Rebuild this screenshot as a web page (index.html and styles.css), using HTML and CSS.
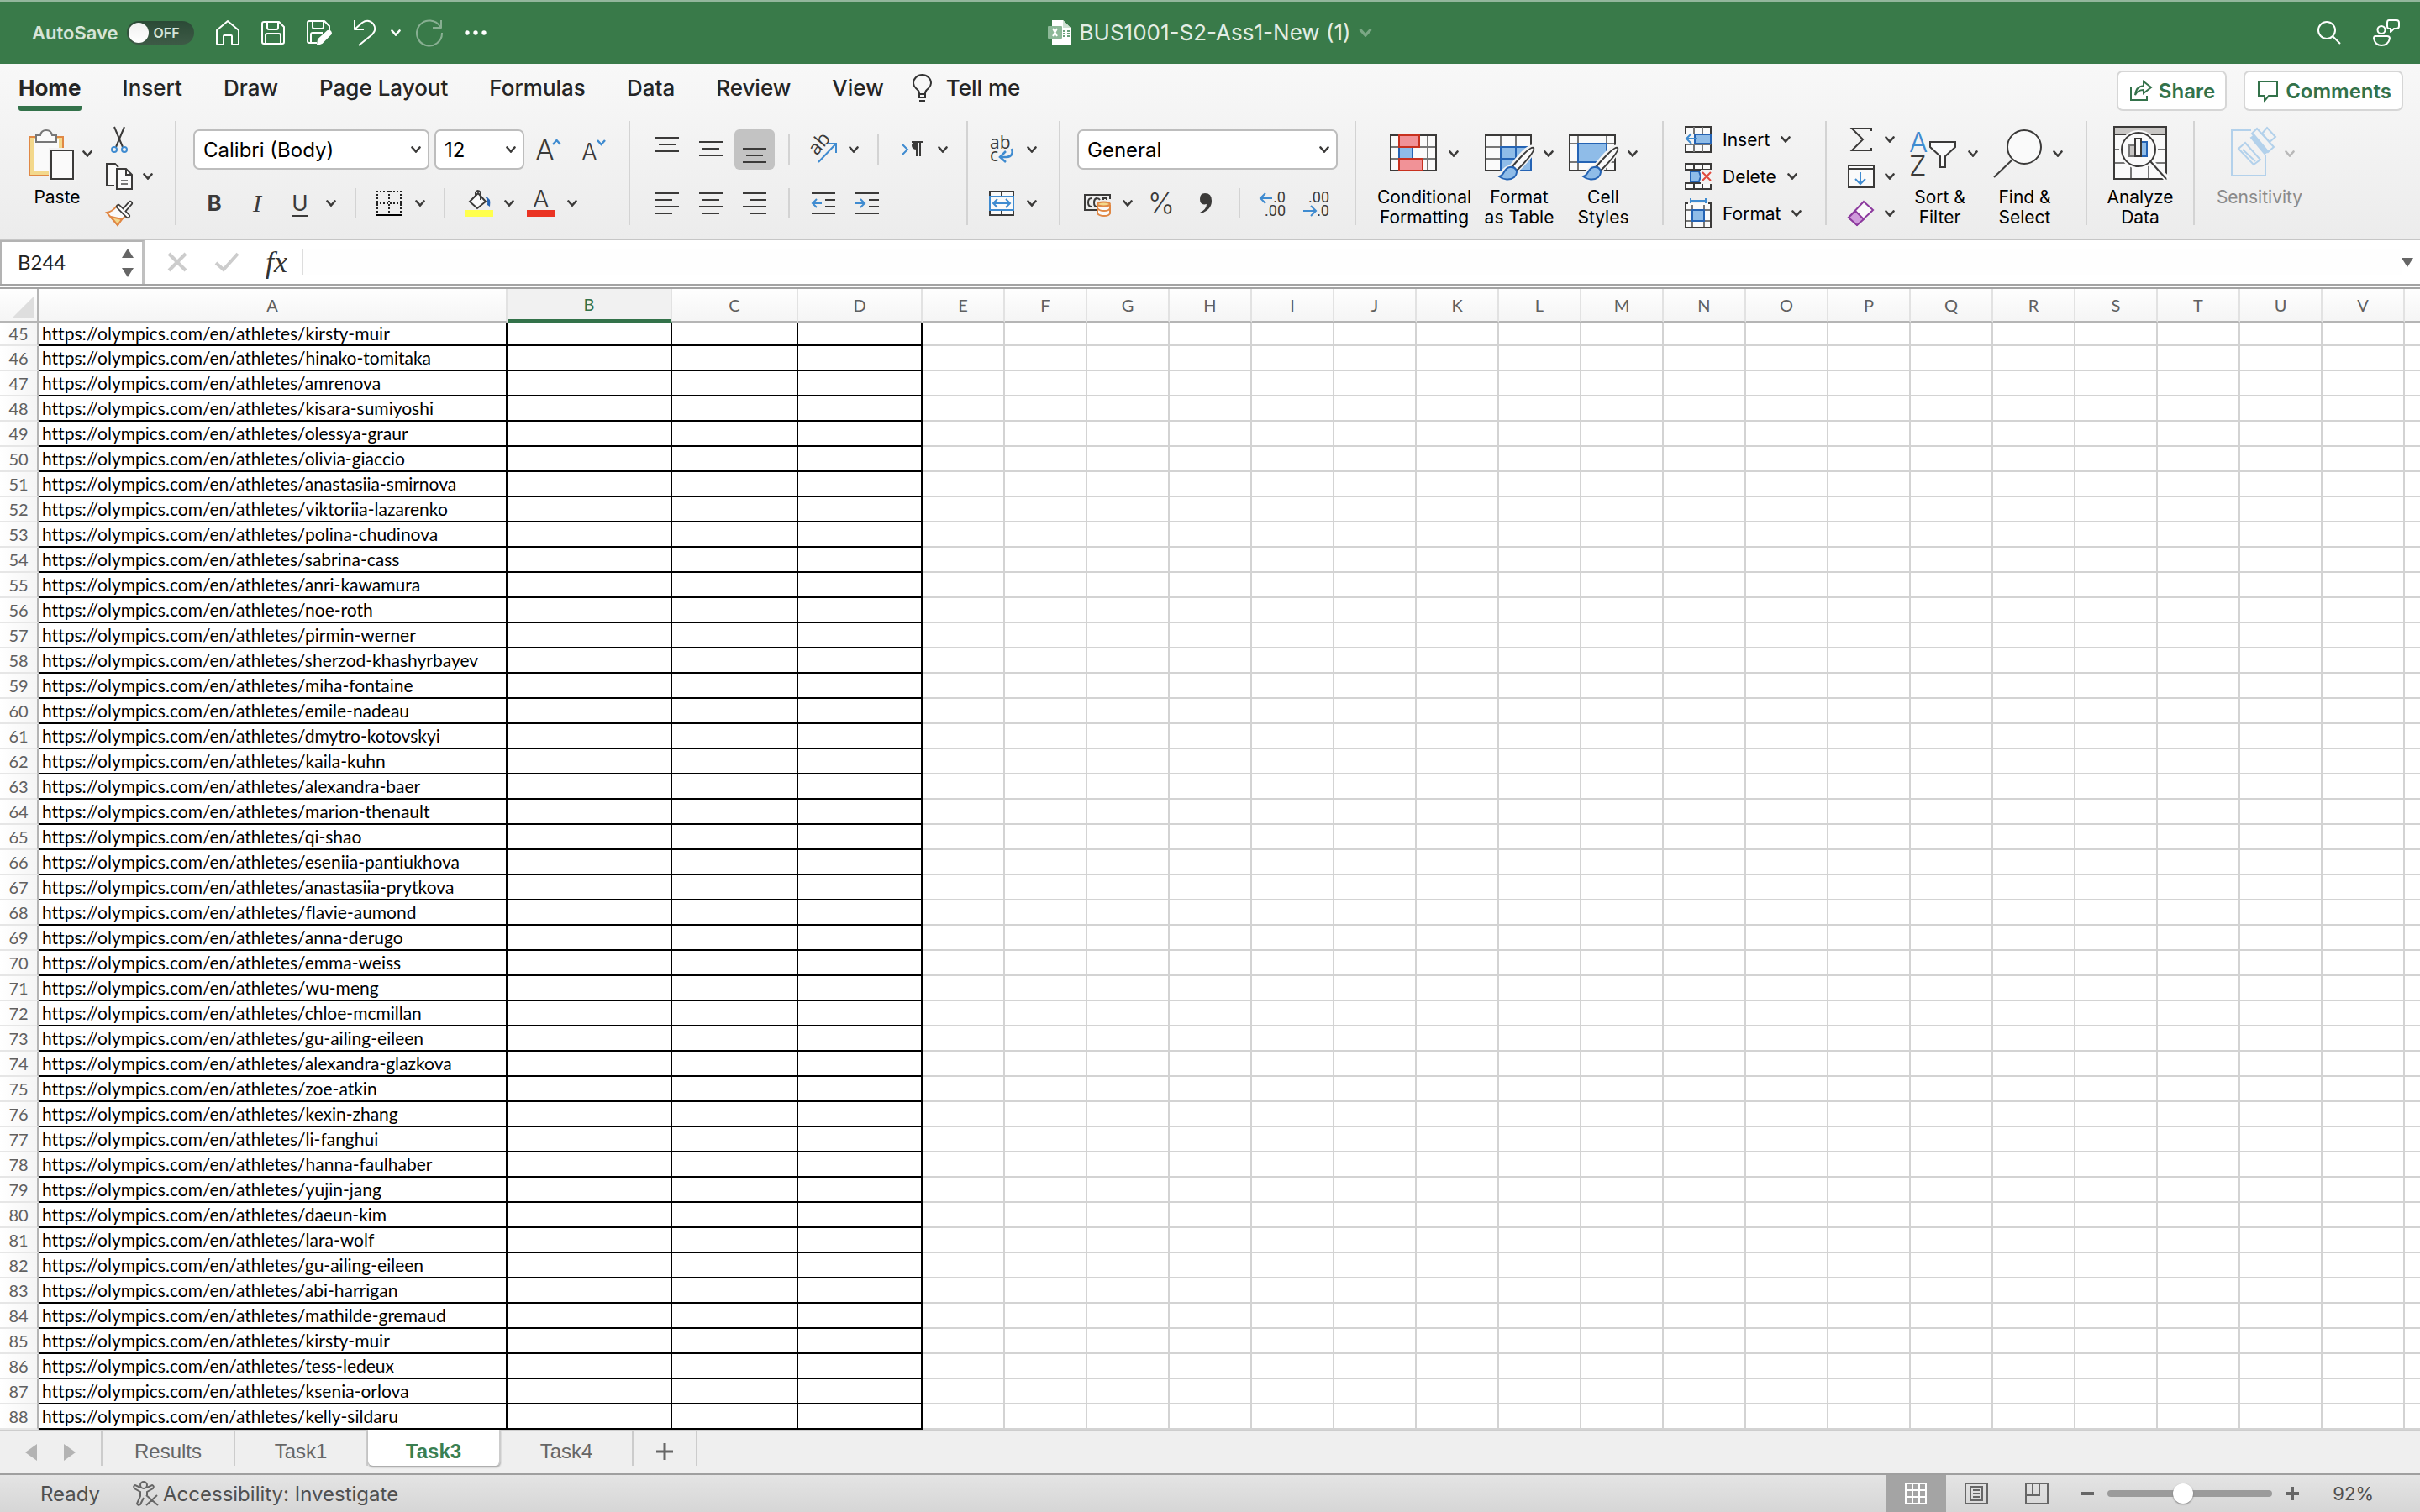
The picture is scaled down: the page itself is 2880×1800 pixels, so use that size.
FILE: index.html
```html
<!DOCTYPE html>
<html lang="en">
<head>
<meta charset="utf-8">
<meta name="viewport" content="width=device-width, initial-scale=1">
<title>BUS1001-S2-Ass1-New (1)</title>
<link rel="stylesheet" href="styles.css">
</head>
<body>
<svg class="sprite" aria-hidden="true">
  <symbol id="chevron" viewBox="0 0 12 8"><path d="M1.5 1.5L6 6.5L10.5 1.5" fill="none" stroke="currentColor" stroke-width="2.6" stroke-linecap="round"/></symbol>
  <symbol id="brush" viewBox="0 0 46 46"><path d="M43 3C46 6 40 14 23 31C26 40 14 45 0 38C8 36 6 28 16 27C28 12 38 1 43 3Z" fill="#f3f3f3" stroke="#f3f3f3" stroke-width="5"/><path d="M43 4C45 7 37 17 23 31L18 26C30 12 40 2 43 4Z" fill="#fafafa" stroke="#3b3a39" stroke-width="2"/><path d="M2 38C9 37 7 28 15 27C22 26 26 33 20 39C15 43 7 42 2 38Z" fill="#8fbce8" stroke="#2463b4" stroke-width="2"/></symbol>
</svg>

<header class="titlebar">
  <div class="quick">
    <label class="autosave"><span>AutoSave</span><span class="toggle"><input type="checkbox" aria-label="AutoSave"><span class="knob"></span><span class="off">OFF</span></span></label>
    <button class="plain" aria-label="Home"><svg width="28" height="32" viewBox="0 0 28 32" class="line"><path d="M1 13L14 2L27 13V29Q27 30 26 30H20Q19 30 19 29V20Q19 19 18 19H10Q9 19 9 20V29Q9 30 8 30H2Q1 30 1 29Z"/></svg></button>
    <button class="plain" aria-label="Save"><svg width="28" height="28" viewBox="0 0 28 28" class="line"><path d="M3 1H21L27 7V25Q27 27 25 27H3Q1 27 1 25V3Q1 1 3 1ZM7 1V8Q7 10 9 10H18Q20 10 20 8V1M5 27V17Q5 15 7 15H21Q23 15 23 17V27"/></svg></button>
    <button class="plain" aria-label="Save As"><svg width="30" height="30" viewBox="0 0 30 30" class="line"><path d="M12 27H3Q1 27 1 25V3Q1 1 3 1H21L27 7V12M7 1V8Q7 10 9 10H18Q20 10 20 8V1M5 27V17Q5 15 7 15H19"/><path d="M13 29L14 23L25 13Q29 12 29 16L18 27Z" fill="#fff"/></svg></button>
    <div class="history">
      <button class="plain" aria-label="Undo"><svg width="26" height="32" viewBox="0 0 26 32" class="line"><path d="M1 1V12H12M1 12L10 4Q17 -1 23 5Q28 12 22 18L6 31"/></svg></button>
      <button class="plain" aria-label="Undo history"><svg width="12" height="8"><use href="#chevron"/></svg></button>
      <button class="plain dim" aria-label="Redo"><svg width="32" height="32" viewBox="0 0 32 32" class="line"><path d="M30 1V10H20M29 9A15 15 0 1 0 31 16"/></svg></button>
    </div>
    <button class="plain" aria-label="More"><svg width="26" height="6" viewBox="0 0 26 6" fill="#fff"><circle cx="3" cy="3" r="2.7"/><circle cx="13" cy="3" r="2.7"/><circle cx="23" cy="3" r="2.7"/></svg></button>
  </div>
  <h1 class="doc-title">
    <svg width="28" height="30" viewBox="0 0 28 30"><path d="M5 0H18L27 9V29H5Z" fill="#fff"/><path d="M18 0L27 9H18Z" fill="#cfe0d3"/><path d="M18 12h3v2h-3zM23 12h3v2h-3zM18 15h3v2h-3zM23 15h3v2h-3zM18 18h3v2h-3zM23 18h3v2h-3z" fill="#6aa07a"/><rect y="7" width="17" height="15" rx="1" fill="#8db898"/><path d="M6 10L11 19M11 10L6 19" stroke="#fff" stroke-width="2"/></svg>
    <span>BUS1001-S2-Ass1-New (1)</span>
    <svg class="title-chev" width="16" height="10"><use href="#chevron"/></svg>
  </h1>
  <div class="title-right">
    <button class="plain" aria-label="Search"><svg width="28" height="28" viewBox="0 0 28 28" class="line"><circle cx="11" cy="11" r="10"/><path d="M18 18L27 27"/></svg></button>
    <button class="plain" aria-label="Presence"><svg width="32" height="32" viewBox="0 0 32 32" class="line"><circle cx="10" cy="12.500" r="4.500"/><path d="M3 20H17Q20 20 20 23Q18 31 10 31Q3 31 1 23Q1 20 3 20ZM19 1H28Q31 1 31 4V8Q31 11 28 11H25L21 15V11H19Q17 11 17 8V4Q17 1 19 1Z"/></svg></button>
  </div>
</header>

<section class="ribbon">
  <div class="tabrow">
    <nav class="tabs">
      <a href="#" class="active">Home</a><a href="#">Insert</a><a href="#">Draw</a><a href="#">Page Layout</a><a href="#">Formulas</a><a href="#">Data</a><a href="#">Review</a><a href="#">View</a>
    </nav>
    <a href="#" class="tellme"><svg width="24" height="32" viewBox="0 0 24 32" fill="none" stroke="#333" stroke-width="2"><path d="M8 22Q8 19 4 16Q1 13 1 10A10.500 10 0 0 1 22 10Q22 13 19 16Q15 19 15 22V27H8ZM8 23H15M8 31H15"/></svg><span>Tell me</span></a>
    <div class="actions">
      <button class="pill"><svg width="26" height="26" viewBox="0 0 26 26" fill="none" stroke="#33724a" stroke-width="2"><path d="M1 9V24H20V19"/><path d="M6 18Q7 8 16 7V2L25 9L16 16V12Q9 12 6 18Z"/></svg>Share</button>
      <button class="pill"><svg width="26" height="26" viewBox="0 0 26 26" fill="none" stroke="#33724a" stroke-width="2"><path d="M2 2H24V19H14L9 25V19H2Z"/></svg>Comments</button>
    </div>
  </div>

  <div class="groups">
    <div class="group g-clipboard">
      <button class="big"><span class="pic"><svg width="54" height="78" viewBox="0 0 54 78"><rect x="1" y="19" width="40" height="46" fill="#f3d88c" stroke="#e08845" stroke-width="2"/><rect x="6" y="22" width="30" height="37" fill="#fafafa"/><path d="M9 25V17H14Q15 11 21 11Q27 11 28 17H33V25Z" fill="#fafafa" stroke="#777" stroke-width="2"/><rect x="24" y="32" width="32" height="40" fill="#f3f3f3"/><rect x="27" y="35" width="26" height="34" fill="#fafafa" stroke="#3b3a39" stroke-width="2"/></svg><svg class="chev"><use href="#chevron"/></svg></span>Paste</button>
      <div class="tools">
        <button aria-label="Cut"><svg width="20" height="32" viewBox="0 0 20 32" fill="none" stroke-width="2"><path d="M4 1L14 25M16 1L6 25" stroke="#3b3a39"/><circle cx="4" cy="28" r="3" stroke="#3f8bd0"/><circle cx="16" cy="28" r="3" stroke="#3f8bd0"/></svg></button><span></span>
        <button aria-label="Copy"><svg width="32" height="32" viewBox="0 0 32 32" fill="#fafafa" stroke="#3b3a39" stroke-width="2"><path d="M10 27H1V1H11L15 5"/><path d="M13 7H24L31 14V31H13Z"/><path d="M24 7V14H31" fill="none"/><path d="M18 21H26M18 25H26" stroke="#777"/></svg></button><button aria-label="Copy options"><svg class="chev"><use href="#chevron"/></svg></button>
        <button aria-label="Format Painter"><svg width="32" height="30" viewBox="0 0 32 30" fill="none" stroke-width="2"><path d="M1 14Q8 13 13 6L24 18Q18 22 14 29Z" fill="#fafafa" stroke="#e08845"/><path d="M6 19L19 22L14 29Z" fill="#f3d88c" stroke="#e08845"/><path d="M15 7L26 18M21 12L29 3" stroke="#3b3a39" stroke-width="6" stroke-linecap="round"/><path d="M15 7L26 18M21 12L29 3" stroke="#fafafa" stroke-width="2.500" stroke-linecap="round"/></svg></button><span></span>
      </div>
    </div>

    <div class="group two g-font">
      <div class="row">
        <span class="select font-name"><select aria-label="Font"><option>Calibri (Body)</option></select><svg class="chev"><use href="#chevron"/></svg></span>
        <span class="select"><select aria-label="Font size"><option>12</option></select><svg class="chev"><use href="#chevron"/></svg></span>
        <button aria-label="Grow font"><svg width="32" height="32" viewBox="0 0 32 32"><text x="0" y="29" class="thin" font-size="34">A</text><path d="M21 10L25.500 5L30 10" fill="none" stroke="#3f8bd0" stroke-width="2.500"/></svg></button>
        <button aria-label="Shrink font"><svg width="32" height="32" viewBox="0 0 32 32"><text x="1" y="29" class="thin" font-size="28">A</text><path d="M20 5L24.500 10L29 5" fill="none" stroke="#3f8bd0" stroke-width="2.500"/></svg></button>
      </div>
      <div class="row">
        <button class="glyph bold">B</button><button class="glyph italic">I</button><button class="glyph under">U</button><button aria-label="Underline options"><svg class="chev"><use href="#chevron"/></svg></button><i class="sep"></i>
        <button aria-label="Borders"><svg width="30" height="30" viewBox="0 0 30 30" fill="none" stroke="#222" stroke-width="2"><path d="M1 0V28M29 0V28M15 0V28M0 1H30M0 15H30" stroke-dasharray="2 2"/><path d="M0 29H30" stroke="#000"/></svg></button><button aria-label="Border options"><svg class="chev"><use href="#chevron"/></svg></button><i class="sep"></i>
        <button aria-label="Fill color"><svg width="34" height="32" viewBox="0 0 34 32"><path d="M6 14L16 4L25 14L15 22Z" fill="#fafafa" stroke="#3b3a39" stroke-width="2"/><path d="M13 9V3Q15 -1 19 3V12" fill="none" stroke="#3b3a39" stroke-width="2"/><path d="M24 8Q32 9 30 20L27 18Q28 12 24 8Z" fill="#2463b4"/><path d="M0 24H34V32H0Z" fill="#ffff4d"/></svg></button><button aria-label="Fill options"><svg class="chev"><use href="#chevron"/></svg></button>
        <button aria-label="Font color"><svg width="34" height="32" viewBox="0 0 34 32"><text x="7" y="21" class="thin" font-size="29">A</text><path d="M0 24H34V32H0Z" fill="#ea3323"/></svg></button><button aria-label="Font color options"><svg class="chev"><use href="#chevron"/></svg></button>
      </div>
    </div>

    <div class="group two g-align">
      <div class="row">
        <button aria-label="Top align"><svg width="28" height="32" viewBox="0 0 28 32" class="ink"><path d="M0 1H28M4 9H24M0 17H28" transform="translate(0 1)"/></svg></button>
        <button aria-label="Middle align"><svg width="28" height="32" viewBox="0 0 28 32" class="ink"><path d="M0 7H28M4 15H24M0 23H28"/></svg></button>
        <button class="pressed" aria-label="Bottom align"><svg width="28" height="32" viewBox="0 0 28 32" class="ink"><path d="M0 15H28M4 23H24M0 31H28"/></svg></button><i class="sep"></i>
        <button aria-label="Orientation"><svg width="34" height="32" viewBox="0 0 34 32"><text x="0" y="0" transform="translate(9 24) rotate(-50)" font-size="23" class="mid">ab</text><path d="M11 31L31 10M22 9H32V20" fill="none" stroke="#3f8bd0" stroke-width="2"/></svg></button><button aria-label="Orientation options"><svg class="chev"><use href="#chevron"/></svg></button><i class="sep"></i>
        <button aria-label="Text direction"><svg width="26" height="20" viewBox="0 0 26 20" fill="none"><path d="M1 4L7 10L1 16" stroke="#3f8bd0" stroke-width="2"/><path d="M18 1V18M22 1V18M12 1H25" stroke="#3b3a39" stroke-width="2"/><path d="M18 1V10Q12 10 12 5Q12 1 18 1Z" fill="#3b3a39"/></svg></button><button aria-label="Direction options"><svg class="chev"><use href="#chevron"/></svg></button>
      </div>
      <div class="row">
        <button aria-label="Align left"><svg width="28" height="28" viewBox="0 0 28 28" class="ink"><path d="M0 2H28M0 10H20M0 18H28M0 26H20"/></svg></button>
        <button aria-label="Center"><svg width="28" height="28" viewBox="0 0 28 28" class="ink"><path d="M0 2H28M4 10H24M0 18H28M4 26H24"/></svg></button>
        <button aria-label="Align right"><svg width="28" height="28" viewBox="0 0 28 28" class="ink"><path d="M0 2H28M8 10H28M0 18H28M8 26H28"/></svg></button><i class="sep"></i>
        <button aria-label="Decrease indent"><svg width="28" height="28" viewBox="0 0 28 28" class="ink"><path d="M0 2H28M16 10H28M16 18H28M0 26H28"/><path d="M12 14H1M6 9L1 14L6 19" stroke="#3f8bd0"/></svg></button>
        <button aria-label="Increase indent"><svg width="28" height="28" viewBox="0 0 28 28" class="ink"><path d="M0 2H28M16 10H28M16 18H28M0 26H28"/><path d="M0 14H11M6 9L11 14L6 19" stroke="#3f8bd0"/></svg></button>
      </div>
    </div>

    <div class="group two g-wrap">
      <div class="row">
        <button aria-label="Wrap text"><svg width="28" height="32" viewBox="0 0 28 32"><text x="0" y="15" font-size="21" class="mid">ab</text><text x="0" y="30" font-size="21" class="mid">c</text><path d="M26 15Q29 24 20 25H13M19 18L12 25L19 31" fill="none" stroke="#3f8bd0" stroke-width="2.500"/></svg></button><button aria-label="Wrap options"><svg class="chev"><use href="#chevron"/></svg></button>
      </div>
      <div class="row">
        <button aria-label="Merge"><svg width="30" height="30" viewBox="0 0 30 30" fill="#fafafa" stroke="#3b3a39" stroke-width="2"><path d="M1 1H29V29H1ZM15 1V7M15 23V29"/><path d="M1 7H29V23H1ZM5 15H25M10 10L5 15L10 20M20 10L25 15L20 20" stroke="#3f8bd0"/></svg></button><button aria-label="Merge options"><svg class="chev"><use href="#chevron"/></svg></button>
      </div>
    </div>

    <div class="group two g-number">
      <div class="row">
        <span class="select"><select aria-label="Number format"><option>General</option></select><svg class="chev"><use href="#chevron"/></svg></span>
      </div>
      <div class="row">
        <button aria-label="Currency"><svg width="32" height="30" viewBox="0 0 32 30" fill="none" stroke="#3b3a39" stroke-width="2"><path d="M31 10V5H1V23H15M9 9Q5 9 5 14Q5 19 9 19M19 11Q18 9 15 9Q12 10 12 14Q12 19 15 19M23 11V9H27V11"/><path d="M16 17V27Q18 30 24 30Q30 30 31 27V17" fill="#fafafa" stroke="#e08845"/><ellipse cx="23.500" cy="16" rx="7.500" ry="2.500" fill="#f3d88c" stroke="#e08845"/><path d="M16 21Q18 24 24 24Q30 24 31 21" stroke="#e08845"/></svg></button><button aria-label="Currency options"><svg class="chev"><use href="#chevron"/></svg></button>
        <button class="glyph percent">%</button>
        <button aria-label="Comma style"><svg width="16" height="26" viewBox="0 0 16 26"><path d="M7 1Q15 1 15 10Q15 21 2 25L1 24Q9 20 9 14Q1 16 1 8Q1 1 7 1Z" fill="#3b3a39"/></svg></button><i class="sep"></i>
        <button aria-label="Increase decimal"><svg width="32" height="32" viewBox="0 0 32 32"><text x="31" y="15" text-anchor="end" font-size="18" class="dec">.0</text><text x="31" y="31" text-anchor="end" font-size="18" class="dec">.00</text><path d="M15 10H1M7 4L1 10L7 16" fill="none" stroke="#3f8bd0" stroke-width="2"/></svg></button>
        <button aria-label="Decrease decimal"><svg width="32" height="32" viewBox="0 0 32 32"><text x="31" y="15" text-anchor="end" font-size="18" class="dec">.00</text><text x="31" y="31" text-anchor="end" font-size="18" class="dec">.0</text><path d="M0 25H15M9 19L15 25L9 31" fill="none" stroke="#3f8bd0" stroke-width="2"/></svg></button>
      </div>
    </div>

    <div class="group g-styles">
      <button class="big"><span class="pic"><svg width="60" height="78" viewBox="0 0 60 78" fill="#fafafa" stroke="#777" stroke-width="2"><path d="M1 17H55V59H1Z"/><path d="M1 31H55M1 45H55M45 17V59M11 17V59" fill="none"/><path d="M1 17H55V59H1Z" fill="none" stroke="#3b3a39"/><path d="M37 32H28V44H44V32Z" stroke="none"/><path d="M11 31H27V45H11Z" fill="#8fbce8" stroke="#2463b4"/><path d="M11 17H35V31H11ZM11 45H39V59H11Z" fill="#f19297" stroke="#c8311f"/></svg><svg class="chev"><use href="#chevron"/></svg></span>Conditional<br>Formatting</button>
      <button class="big"><span class="pic"><svg width="60" height="78" viewBox="0 0 60 78" fill="#fafafa" stroke="#777" stroke-width="2"><path d="M1 17H55V59H1Z"/><path d="M1 31H55M1 45H19M19 17V59M37 17V31" fill="none"/><path d="M1 17H55V59H1Z" fill="none" stroke="#3b3a39"/><path d="M19 31H55V59H19ZM37 31V59M19 45H55" fill="#8fbce8" stroke="#2463b4"/><use href="#brush" x="15" y="28" width="46" height="46"/></svg><svg class="chev"><use href="#chevron"/></svg></span>Format<br>as Table</button>
      <button class="big"><span class="pic"><svg width="60" height="78" viewBox="0 0 60 78" fill="#fafafa" stroke="#777" stroke-width="2"><path d="M1 17H55V59H1Z"/><path d="M1 27H55M1 49H55M11 17V59M45 17V59" fill="none"/><path d="M1 17H55V59H1Z" fill="none" stroke="#3b3a39"/><path d="M11 27H45V49H11Z" fill="#8fbce8" stroke="#2463b4"/><use href="#brush" x="15" y="28" width="46" height="46"/></svg><svg class="chev"><use href="#chevron"/></svg></span>Cell<br>Styles</button>
    </div>

    <div class="group g-cells">
      <button><svg width="32" height="32" viewBox="0 0 32 32" fill="#fafafa" stroke="#777" stroke-width="2"><path d="M1 1H31V31H1Z" stroke="#3b3a39"/><path d="M11 1V31M21 1V31M1 10H31M1 22H31" fill="none"/><path d="M0 9H12V22H0Z" fill="#f3f3f3" stroke="none"/><path d="M12 10H31V21H12Z" fill="#8fbce8" stroke="#2463b4"/><path d="M15 15H2M8 9L2 15L8 21" fill="none" stroke="#3f8bd0"/></svg>Insert<svg class="chev"><use href="#chevron"/></svg></button>
      <button><svg width="32" height="32" viewBox="0 0 32 32" fill="#fafafa" stroke="#777" stroke-width="2"><path d="M1 8V1H31V8ZM1 31V24H31V31ZM11 1V8M21 1V8M11 24V31M21 24V31" stroke="#3b3a39"/><path d="M7 10H17L19 16L17 22H7Z" fill="#8fbce8" stroke="#2463b4"/><path d="M19 8H32V25H19Z" fill="#f3f3f3" stroke="none"/><path d="M21 11L31 21M31 11L21 21" fill="none" stroke="#e04a3f"/></svg>Delete<svg class="chev"><use href="#chevron"/></svg></button>
      <button><svg width="32" height="36" viewBox="0 0 32 36" fill="#fafafa" stroke="#777" stroke-width="2"><path d="M7 3H25M7 0V6M25 0V6" stroke="#3f8bd0"/><path d="M1 6V35H31V6"/><path d="M9 8V35M23 8V35M1 14H31M1 27H31" fill="none"/><path d="M4 6H1V35H31V6H28" fill="none" stroke="#3b3a39"/><path d="M9 14H23V27H9Z" fill="#8fbce8" stroke="#2463b4"/></svg>Format<svg class="chev"><use href="#chevron"/></svg></button>
    </div>

    <div class="group g-edit">
      <div class="tools">
        <button aria-label="AutoSum"><svg width="26" height="28" viewBox="0 0 26 28" class="ink"><path d="M25 4V1H2L15 14L2 27H25V24"/></svg></button><button aria-label="Sum options"><svg class="chev"><use href="#chevron"/></svg></button>
        <button aria-label="Fill"><svg width="32" height="28" viewBox="0 0 32 28" class="ink"><path d="M1 1H31V27H1ZM1 5H31" fill="#fafafa"/><path d="M15 9V22M9 17L15 23L21 17" stroke="#3f8bd0"/></svg></button><button aria-label="Fill options"><svg class="chev"><use href="#chevron"/></svg></button>
        <button aria-label="Clear"><svg width="32" height="30" viewBox="0 0 32 30" stroke="#8c3a9e" stroke-width="2"><path d="M19 1L30 11L11 29L1 20Z" fill="#fafafa"/><path d="M9 12L19 22L11 29L1 20Z" fill="#cf9adb"/></svg></button><button aria-label="Clear options"><svg class="chev"><use href="#chevron"/></svg></button>
      </div>
      <button class="big"><span class="pic"><svg width="60" height="78" viewBox="0 0 60 78"><text x="0" y="37" class="thin azure" font-size="33">A</text><text x="0" y="65" class="thin" font-size="33">Z</text><path d="M25 25H55V31L43 42V55H37V42L25 31Z" fill="#fafafa" stroke="#3b3a39" stroke-width="2"/></svg><svg class="chev"><use href="#chevron"/></svg></span>Sort &amp;<br>Filter</button>
      <button class="big"><span class="pic"><svg width="60" height="78" viewBox="0 0 60 78" fill="#fafafa" stroke="#3b3a39" stroke-width="2"><circle cx="36" cy="31" r="20"/><path d="M22 46L0 67"/></svg><svg class="chev"><use href="#chevron"/></svg></span>Find &amp;<br>Select</button>
    </div>

    <div class="group g-analyze">
      <button class="big"><span class="pic"><svg width="64" height="78" viewBox="0 0 64 78" fill="#fafafa" stroke="#777" stroke-width="2"><path d="M1 7H63V69H1Z"/><path d="M1 34H63M1 50H63M21 50V69M42 50V69" fill="none"/><path d="M1 7H63V16H1Z" fill="#c8c6c4"/><path d="M1 16H63M1 7H63V69H1Z" fill="none" stroke="#3b3a39"/><circle cx="30" cy="34" r="23" stroke="none"/><path d="M19 29H26V42H19Z" fill="#c8c6c4"/><path d="M33 25H40V42H33Z" fill="#8fbce8" stroke="#2463b4"/><path d="M26 21H33V42H26Z" stroke="#3b3a39"/><circle cx="30" cy="34" r="20" fill="none" stroke="#3b3a39"/><path d="M46 50L64 69" stroke="#fafafa" stroke-width="7"/><path d="M44 48L63 69" stroke="#3b3a39"/></svg></span>Analyze<br>Data</button>
    </div>

    <div class="group g-sensitivity">
      <button class="big" disabled><span class="pic"><svg width="54" height="78" viewBox="0 0 54 78" fill="none" stroke="#b3d1eb" stroke-width="2"><path d="M24 11H1V65H41V40"/><path d="M9 33L17 26L35 46L27 52ZM14 34L29 48" /><path d="M25 15L31 9L51 31L44 37Z" fill="#f3f3f3"/><path d="M24 20L28 17L44 36L40 39Z" fill="#b3d1eb"/><path d="M37 15L43 8L53 19L46 25Z" fill="#f3f3f3"/></svg><svg class="chev"><use href="#chevron"/></svg></span>Sensitivity</button>
    </div>
  </div>
</section>

<section class="formula">
  <div class="namebox"><input type="text" value="B244" aria-label="Name box"><span class="spin"><i class="up"></i><i class="down"></i></span></div>
  <button aria-label="Cancel"><svg width="24" height="24" viewBox="0 0 24 24"><path d="M2 2L22 22M22 2L2 22" stroke="#ccc" stroke-width="4"/></svg></button>
  <button aria-label="Enter"><svg width="28" height="24" viewBox="0 0 28 24"><path d="M1 13L10 21L27 2" fill="none" stroke="#ccc" stroke-width="4"/></svg></button>
  <button class="fx">fx</button>
  <input class="entry" type="text" aria-label="Formula">
  <i class="down"></i>
</section>

<main class="sheet">
  <table>
    <colgroup id="cols"></colgroup>
    <thead><tr id="letters"></tr></thead>
    <tbody id="rows"></tbody>
  </table>
</main>

<nav class="sheets">
  <div class="arrows"><button aria-label="Previous sheet"><svg width="14" height="20"><path d="M14 0V20L0 10Z" fill="#b3b3b3"/></svg></button><button aria-label="Next sheet"><svg width="14" height="20"><path d="M0 0V20L14 10Z" fill="#b3b3b3"/></svg></button></div>
  <a href="#">Results</a><a href="#">Task1</a><a href="#" class="active">Task3</a><a href="#">Task4</a>
  <button class="add" aria-label="Add sheet"><svg width="20" height="20"><path d="M10 0V20M0 10H20" stroke="#666" stroke-width="3"/></svg></button>
</nav>

<footer class="status">
  <span class="ready">Ready</span>
  <a href="#" class="access"><svg width="30" height="30" viewBox="0 0 30 30" fill="none" stroke="#666" stroke-width="2"><circle cx="13" cy="5" r="4"/><path d="M9 8L3 5Q0 6 2 9L9 13V18L5 27Q6 30 9 28L13 20M17 8L23 5Q26 6 24 9L17 13V17M16 17L30 29M29 17L16 29"/></svg><span>Accessibility: Investigate</span></a>
  <div class="views">
    <button class="on" aria-label="Normal view"><svg width="26" height="26" viewBox="0 0 26 26" fill="none" stroke="#fff" stroke-width="2"><path d="M1 1H25V25H1ZM9 1V25M17 1V25M1 9H25M1 17H25"/></svg></button>
    <button aria-label="Page layout view"><svg width="28" height="26" viewBox="0 0 28 26" fill="none" stroke="#666" stroke-width="2"><path d="M1 1H27V25H1ZM7 5H21V21H7ZM10 9H18M10 13H18M10 17H18"/></svg></button>
    <button aria-label="Page break view"><svg width="28" height="26" viewBox="0 0 28 26" fill="none" stroke="#666" stroke-width="2"><path d="M1 1H27V25H1ZM1 15H17V1M9 1V15"/></svg></button>
  </div>
  <button class="zoom" aria-label="Zoom out"><svg width="16" height="18"><path d="M0 9H16" stroke="#666" stroke-width="4"/></svg></button>
  <input type="range" min="0" max="1000" value="453" aria-label="Zoom">
  <button class="zoom" aria-label="Zoom in"><svg width="16" height="18"><path d="M0 9H16M8 1V17" stroke="#666" stroke-width="4"/></svg></button>
  <span class="percent-label">92%</span>
</footer>
<script src="script.js"></script>
</body>
</html>
```
FILE: script.js
```js
const firstRow = 45;
const athletes = [
  'kirsty-muir', 'hinako-tomitaka', 'amrenova', 'kisara-sumiyoshi', 'olessya-graur',
  'olivia-giaccio', 'anastasiia-smirnova', 'viktoriia-lazarenko', 'polina-chudinova',
  'sabrina-cass', 'anri-kawamura', 'noe-roth', 'pirmin-werner', 'sherzod-khashyrbayev',
  'miha-fontaine', 'emile-nadeau', 'dmytro-kotovskyi', 'kaila-kuhn', 'alexandra-baer',
  'marion-thenault', 'qi-shao', 'eseniia-pantiukhova', 'anastasiia-prytkova',
  'flavie-aumond', 'anna-derugo', 'emma-weiss', 'wu-meng', 'chloe-mcmillan',
  'gu-ailing-eileen', 'alexandra-glazkova', 'zoe-atkin', 'kexin-zhang', 'li-fanghui',
  'hanna-faulhaber', 'yujin-jang', 'daeun-kim', 'lara-wolf', 'gu-ailing-eileen',
  'abi-harrigan', 'mathilde-gremaud', 'kirsty-muir', 'tess-ledeux', 'ksenia-orlova',
  'kelly-sildaru'
];
const letters = 'ABCDEFGHIJKLMNOPQRSTUV'.split('');
const lead = ['head', 'a', 'b', 'c', 'd'];

document.getElementById('cols').innerHTML =
  lead.map(n => `<col class="col-${n}">`).join('') +
  '<col class="col-std">'.repeat(letters.length - 4) + '<col>';

document.getElementById('letters').innerHTML =
  '<th class="corner"><svg width="26" height="26"><path d="M26 0V26H0Z" fill="#dedede"/></svg></th>' +
  letters.map(l => `<th scope="col"${l === 'B' ? ' class="current"' : ''}>${l}</th>`).join('') + '<th></th>';

document.getElementById('rows').innerHTML = athletes.map((name, i) =>
  `<tr><th scope="row">${firstRow + i}</th>` +
  `<td class="data">https://olympics.com/en/athletes/${name}</td>` +
  '<td class="data"></td>'.repeat(3) +
  '<td></td>'.repeat(letters.length - 3) + '</tr>').join('');
```
FILE: styles.css
```css
* { box-sizing: border-box; }
html, body { height: 100%; }
body {
  margin: 0;
  display: flex;
  flex-direction: column;
  font-family: Inter, "Liberation Sans", sans-serif;
  color: #111;
  background: #fff;
  overflow: hidden;
}
button, input, select { font: inherit; color: inherit; margin: 0; }
button { border: 0; padding: 0; background: none; }
a { color: inherit; text-decoration: none; }
svg { display: block; flex: none; overflow: visible; }
.sprite { position: absolute; width: 0; height: 0; }
.chev { width: 12px; height: 8px; color: #3b3a39; }
.line { fill: none; stroke: #fff; stroke-width: 2; stroke-linejoin: round; }
.ink { fill: none; stroke: #3b3a39; stroke-width: 2; }

/* Title bar */
.titlebar {
  flex: none;
  height: 76px;
  display: grid;
  grid-template-columns: 1fr auto 1fr;
  align-items: center;
  padding: 0 24px;
  background: #397a49;
  border-top: 2px solid #93b69c;
  color: #fff;
}
.quick { display: flex; align-items: center; gap: 26px; padding-left: 14px; }
.autosave { display: flex; align-items: center; gap: 10px; font-size: 22px; font-weight: 600; color: #d5e4d9; }
.toggle { display: flex; align-items: center; width: 80px; height: 28px; padding: 0 2px; gap: 6px; border-radius: 14px; background: linear-gradient(#2b4a36, #3d5a46); }
.toggle input { position: absolute; opacity: 0; }
.knob { width: 24px; height: 24px; border-radius: 50%; background: linear-gradient(#f0f0f0, #fff); }
.off { font-size: 16px; font-weight: 600; }
.history { display: flex; align-items: center; gap: 18px; }
.dim { opacity: .4; }
.doc-title { display: flex; align-items: center; gap: 10px; margin: 0; font-size: 26px; font-weight: 400; line-height: 32px; color: #e3ede5; }
.title-chev { color: #7ba785; }
.title-right { display: flex; align-items: center; justify-content: flex-end; gap: 38px; }

/* Ribbon */
.ribbon { flex: none; height: 210px; background: linear-gradient(#f8f8f8, #f2f2f2 50%, #ececec); border-bottom: 2px solid #c6c6c6; }
.tabrow { display: flex; height: 68px; padding: 8px 20px 0 22px; }
.tabs { display: flex; align-items: flex-start; gap: 49px; font-size: 26px; font-weight: 500; color: #252525; }
.tabs a { height: 48px; padding-top: 5px; line-height: 32px; }
.tabs .active { font-weight: 700; border-bottom: 6px solid #33724a; border-radius: 3px; }
.tellme { display: flex; gap: 16px; margin-left: 34px; padding-top: 5px; font-size: 26px; font-weight: 500; line-height: 32px; color: #252525; }
.actions { display: flex; gap: 20px; margin-left: auto; }
.pill { display: flex; align-items: center; gap: 8px; height: 48px; padding: 0 12px 0 14px; border: 2px solid #d6d6d6; border-radius: 7px; background: #fff; font-size: 24px; font-weight: 600; color: #33724a; }
.groups { display: flex; height: 124px; }
.group { flex: none; display: flex; border-right: 2px solid #d3d3d3; }
.group:last-child { border-right: 0; }
.group button { display: flex; align-items: center; justify-content: center; }
.group .big { flex-direction: column; justify-content: flex-start; height: 128px; font-size: 21px; line-height: 24px; color: #000; }
.group .big:disabled { color: #8a8a8a; }
.big:disabled .chev { color: #b8b8b8; }
.pic { display: flex; align-items: center; gap: 10px; height: 78px; margin-bottom: 1px; }
.g-clipboard .pic, .g-edit .pic, .g-sensitivity .pic { padding-left: 8px; }
.tools { display: grid; grid-auto-rows: 44px; }
.two { flex-direction: column; gap: 16px; padding-top: 10px; }
.row { display: grid; align-items: center; justify-items: center; height: 48px; }
.sep { width: 2px; height: 36px; background: #d3d3d3; }

.select { display: grid; grid-template-columns: 1fr auto; align-items: center; width: 100%; height: 48px; padding-right: 8px; border: 2px solid #bdbdbd; border-radius: 7px; background: #fff; }
.select select { grid-area: 1 / 1 / 2 / 3; width: 100%; height: 44px; padding: 0 24px 0 10px; border: 0; background: none; appearance: none; font-size: 24px; color: #000; }
.select .chev { grid-area: 1 / 2; }

.thin { font-family: Inter, sans-serif; font-weight: 300; fill: #3b3a39; }
.mid { font-family: "Open Sans", sans-serif; fill: #3b3a39; }
.dec { font-family: Roboto, sans-serif; fill: #3b3a39; }
.azure { fill: #3f8bd0; }
.glyph { font-size: 26px; line-height: 32px; color: #3b3a39; }
.bold { font-weight: 700; }
.italic { font-family: "Liberation Serif", serif; font-style: italic; font-size: 30px; }
.under { text-decoration: underline; text-underline-offset: 5px; text-decoration-thickness: 2px; }
.percent { font-size: 34px; font-weight: 300; }
.pressed { width: 48px; height: 48px; border-radius: 6px; background: #c3c3c3; }

.g-clipboard { width: 210px; padding-left: 22px; }
.g-clipboard .big { width: 92px; margin-right: 8px; }
.g-clipboard .tools { grid-template-columns: 40px 28px; }
.g-font { width: 540px; padding-left: 20px; }
.g-font .row:first-child { grid-template-columns: 287px 107px 58px 50px; }
.g-font .row:last-child { grid-template-columns: 50px 52px 50px 24px 34px 46px 28px 30px 52px 20px 56px 18px; }
.g-font .font-name { width: 281px; justify-self: start; }
.g-align { width: 402px; padding-left: 18px; }
.g-align .row { grid-template-columns: 52px 52px 52px 30px 52px 20px 38px 44px 28px; }
.g-align .row:last-child { grid-template-columns: 52px 52px 52px 30px 52px 52px; }
.g-wrap { width: 110px; padding-left: 19px; }
.g-wrap .row { grid-template-columns: 42px 30px; }
.g-number { width: 352px; padding-left: 20px; }
.g-number .row:first-child { grid-template-columns: 310px; }
.g-number .row:last-child { grid-template-columns: 48px 24px 56px 50px 30px 50px 54px; }
.g-styles { width: 366px; padding-left: 19px; display: grid; grid-template-columns: 124px 102px 98px; }
.g-cells { width: 194px; padding-left: 25px; display: grid; grid-auto-rows: 44px; }
.g-cells button { justify-content: flex-start; gap: 13px; font-size: 21px; color: #000; }
.g-edit { width: 310px; padding-left: 16px; }
.g-edit .tools { grid-template-columns: 50px 18px; }
.g-edit .big { width: 101px; }
.g-analyze { width: 128px; justify-content: center; }
.g-sensitivity { padding-left: 22px; }
.g-sensitivity .big { width: 110px; }

/* Formula bar */
.formula { flex: none; display: flex; align-items: center; height: 58px; padding-right: 8px; background: #fff; border-bottom: 6px double #a3a3a3; }
.namebox { display: flex; align-items: center; justify-content: space-between; align-self: stretch; width: 172px; padding: 0 10px 0 19px; border: 2px solid #b3b3b3; border-bottom: 0; border-right: 3px solid #c0c0c0; margin-right: 18px; }
.namebox input { width: 100px; padding: 0 0 4px; border: 0; font: 24px Lato, sans-serif; color: #222; }
.spin { display: flex; flex-direction: column; gap: 12px; }
.up, .down { border: 7px solid transparent; border-top: 11px solid #666; border-bottom: 0; }
.up { border-top: 0; border-bottom: 11px solid #666; }
.formula button { display: flex; justify-content: center; width: 42px; margin-right: 17px; }
.formula .fx { margin-right: 9px; font: italic 36px "Liberation Serif", serif; color: #333; }
.entry { flex: 1; height: 30px; border: 0; border-left: 2px solid #ddd; background: #fefefe; }

/* Grid */
.sheet { flex: 1; min-height: 0; overflow: hidden; border-bottom: 2px solid #cdcdcd; font-family: Lato, sans-serif; font-variant-ligatures: none; }
.sheet table { width: 100%; table-layout: fixed; border-collapse: separate; border-spacing: 0; }
.col-head { width: 46px; }
.col-a { width: 558px; }
.col-b { width: 196px; }
.col-c { width: 150px; }
.col-d { width: 148px; }
.col-std { width: 98px; }
.sheet th { padding: 0; font-size: 20px; font-weight: 400; color: #606060; border-right: 2px solid #e2e2e2; }
.sheet thead th { height: 40px; line-height: 36px; background: linear-gradient(#fefefe, #f5f5f5); border-bottom: 2px solid #b5b5b5; }
.sheet thead .current { background: #f1f1f1; color: #33724a; border-bottom: 4px solid #33724a; }
.corner svg { margin: 6px 0 0 14px; }
.sheet thead .corner, .sheet tbody th { border-right-color: #b5b5b5; }
.sheet tbody th { background: linear-gradient(90deg, #fff, #f5f5f5); border-bottom: 2px solid #e6e6e6; }
.sheet td { padding: 0 0 0 4px; border-right: 2px solid #d3d3d3; border-bottom: 2px solid #d3d3d3; font-size: 21px; white-space: nowrap; color: #000; }
.sheet th:last-child, .sheet td:last-child { border-right: 0; }
.sheet tbody tr { height: 30px; line-height: 28px; }
.sheet tbody tr:first-child { height: 28px; line-height: 26px; }
.sheet td.data { border-color: #000; }

/* Sheet tabs */
.sheets { flex: none; display: flex; height: 50px; padding-bottom: 9px; background: #efefef; font: 24px "Liberation Sans", sans-serif; color: #666; }
.arrows { display: flex; align-items: center; gap: 32px; width: 122px; padding: 8px 0 0 30px; border-right: 2px solid #ccc; }
.sheets a { display: flex; align-items: center; justify-content: center; width: 158px; padding-top: 6px; border-right: 2px solid #ccc; }
.sheets .active { margin-top: -2px; padding-top: 8px; background: #fff; color: #3a7f52; font-weight: 700; border-radius: 0 0 6px 6px; box-shadow: 0 2px 2px #aaa; }
.add { display: flex; align-items: center; justify-content: center; width: 76px; padding-top: 6px; border-right: 2px solid #ccc; }

/* Status bar */
.status { flex: none; display: flex; align-items: center; height: 46px; padding: 0 55px 0 48px; background: linear-gradient(#e4e4e4, #d6d6d6); border-top: 2px solid #9f9f9f; font-size: 24px; color: #505050; }
.ready { width: 110px; }
.access { display: flex; align-items: center; gap: 6px; }
.views { display: flex; align-self: stretch; margin-left: auto; }
.views button { display: flex; align-items: center; justify-content: center; width: 72px; }
.views .on { background: #a4a4a4; }
.zoom { display: flex; justify-content: center; width: 48px; }
.status input { width: 196px; height: 24px; appearance: none; background: none; }
.status input::-webkit-slider-runnable-track { height: 8px; border-radius: 4px; background: #9b9b9b; }
.status input::-webkit-slider-thumb { appearance: none; width: 24px; height: 24px; margin-top: -8px; border-radius: 50%; background: #fff; box-shadow: 0 1px 2px #777; }
.percent-label { width: 73px; font-size: 22px; text-align: right; }
```
